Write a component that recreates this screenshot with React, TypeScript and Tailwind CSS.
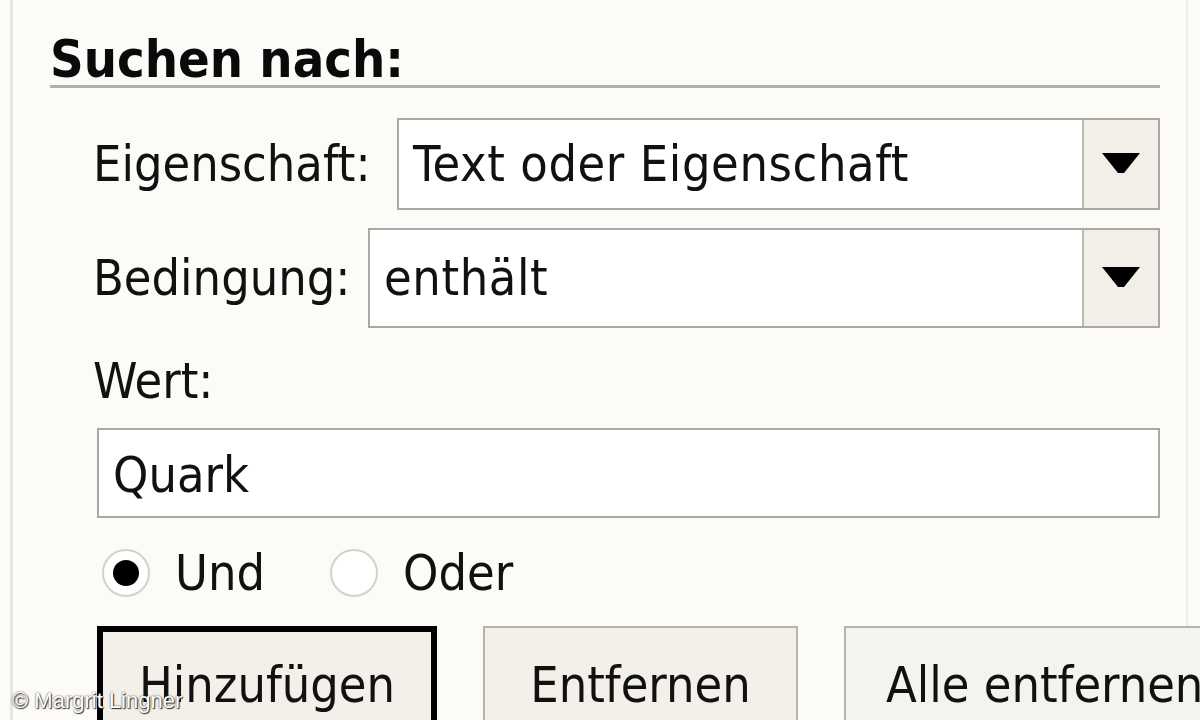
import React from "react";

const ui = "font-['DejaVu_Sans_Condensed','DejaVu_Sans',sans-serif]";

function Arrow() {
  return (
    <svg width="38" height="22" viewBox="0 0 38 22" className="block">
      <path d="M0 0 H38 L22 20 H16 Z" fill="#000" />
    </svg>
  );
}

function Dropdown({ value }: { value: string }) {
  return (
    <div className="flex h-full flex-1 border-2 border-[#a9a8a1] bg-white">
      <div className="flex flex-1 items-center px-[14px] text-[50px] leading-none tracking-[0.6px] text-[#111]">{value}</div>
      <div className="flex w-[76px] items-center justify-center border-l-2 border-[#b9b8b1] bg-[#f1efe8]">
        <Arrow />
      </div>
    </div>
  );
}

function Radio({ checked, label }: { checked?: boolean; label: string }) {
  return (
    <label className="flex items-center gap-[25px]">
      <span className="flex h-[48px] w-[48px] items-center justify-center rounded-full border-2 border-[#d2d1cb] bg-white">
        {checked && <span className="h-[26px] w-[26px] rounded-full bg-black" />}
      </span>
      <span className="text-[50px] leading-none text-[#111]">{label}</span>
    </label>
  );
}

export default function App() {
  return (
    <div className={`relative flex h-[720px] w-[1200px] overflow-hidden bg-[#fcfbf8] ${ui}`}>
      <div className="w-[10px] shrink-0" />
      <div className="flex w-[1178px] shrink-0 flex-col border-l-[3px] border-r-2 border-l-[#e8e6e0] border-r-[#efede8] pr-[26px]">
        <h1 className="ml-[37px] mt-[33px] shrink-0 text-[52px] font-bold leading-none text-[#0a0a0a]">Suchen nach:</h1>
        <div className="ml-[37px] mt-[0px] h-[3px] shrink-0 bg-[#b1b0a9]" />

        <div className="mt-[30px] flex h-[92px] shrink-0 items-center">
          <div className="w-[384px] shrink-0 pl-[80px] text-[50px] leading-none text-[#111]">Eigenschaft:</div>
          <Dropdown value="Text oder Eigenschaft" />
        </div>

        <div className="mt-[18px] flex h-[100px] shrink-0 items-center">
          <div className="w-[355px] shrink-0 pl-[80px] text-[50px] leading-none text-[#111]">Bedingung:</div>
          <Dropdown value="enthält" />
        </div>

        <div className="ml-[80px] mt-[28px] shrink-0 text-[50px] leading-none text-[#111]">Wert:</div>

        <div className="ml-[84px] mt-[22px] flex h-[90px] shrink-0 items-center border-2 border-[#a9a8a1] bg-white px-[14px] pt-[4px] text-[50px] leading-none text-[#111]">
          Quark
        </div>

        <div className="ml-[89px] mt-[30px] flex shrink-0 items-center gap-[65px]">
          <Radio checked label="Und" />
          <Radio label="Oder" />
        </div>

        <div className="mt-[28px] flex shrink-0 gap-[46px] pl-[84px] text-[50px] leading-none text-[#111]">
          <button className="flex h-[110px] w-[340px] shrink-0 justify-center border-[6px] border-black bg-[#f2f0e9] pt-[28px]">
            Hinzufügen
          </button>
          <button className="flex h-[110px] w-[315px] shrink-0 justify-center border-2 border-[#b4b3ac] bg-[#f2f0e9] pt-[32px]">
            Entfernen
          </button>
          <button className="flex h-[110px] w-[380px] shrink-0 justify-start border-2 border-[#b4b3ac] bg-[#f5f3ee] pl-[40px] pt-[32px]">
            Alle entfernen
          </button>
        </div>
      </div>
      <div className="absolute bottom-[8px] left-[12px] font-['Liberation_Sans',sans-serif] text-[22px] leading-none text-white [text-shadow:0_0_2px_#333,1px_1px_1px_#333]">
        © Margrit Lingner
      </div>
    </div>
  );
}
